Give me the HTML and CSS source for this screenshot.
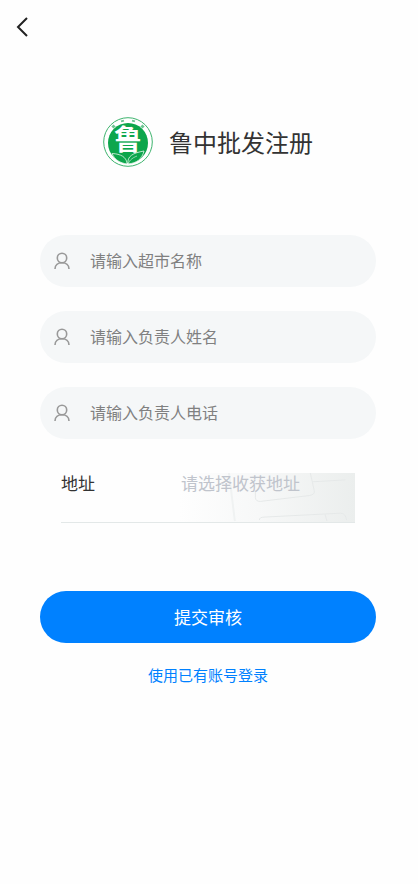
FILE: index.html
```html
<!DOCTYPE html>
<html lang="zh-CN">
<head>
  <meta charset="UTF-8" />
  <meta name="viewport" content="width=device-width, initial-scale=1.0"/>
  <title>鲁中批发注册</title>
  <link rel="stylesheet" href="styles.css">
</head>
<body>

<header class="nav">
  <button type="button" class="back-button" aria-label="返回">
    <svg width="12" height="20" viewBox="0 0 12 20" fill="none" stroke="#222" stroke-width="2">
      <path d="M11 1 L2 10 L11 19"/>
    </svg>
  </button>
</header>

<main class="main-content">
  <div class="brand">
    <svg class="logo" viewBox="0 0 50 50">
      <circle cx="25" cy="25" r="24.3" fill="#fff" stroke="#3db36d" stroke-width="1"/>
      <circle cx="25" cy="26" r="20" fill="#0da64c"/>
      <g fill="#6cc492">
        <rect x="9" y="8" width="3" height="3" transform="rotate(-43 10.5 9.5)"/>
        <rect x="18" y="3" width="3" height="2" transform="rotate(-16 19.5 4)"/>
        <rect x="29" y="3" width="3" height="2" transform="rotate(16 30.5 4)"/>
        <rect x="38" y="8" width="3" height="3" transform="rotate(43 39.5 9.5)"/>
      </g>
      <text class="logo-text" x="25" y="33" text-anchor="middle">鲁</text>
      <!-- leaves -->
      <path d="M24 46 C23 40 18 37 9 36.5 C12 43 17 46 24 47 Z" fill="#0da64c" stroke="#e4f5eb" stroke-width="0.8"/>
      <path d="M25 47 C24 39 30 36 41 34 C39 42 34 46 25 47 Z" fill="#0da64c" stroke="#e4f5eb" stroke-width="0.8"/>
      <path d="M25 49 C25 44 29 41 34 39" fill="none" stroke="#e4f5eb" stroke-width="0.6"/>
    </svg>
    <h1>鲁中批发注册</h1>
  </div>

  <form class="register-form">
    <label class="field">
      <svg class="user-icon" viewBox="0 0 16 18">
        <circle cx="8" cy="6" r="4.7"/>
        <path d="M1 17 C1 13 4 10.7 8 10.7 C12 10.7 15 13 15 17"/>
      </svg>
      <input type="text" placeholder="请输入超市名称" aria-label="超市名称">
    </label>
    <label class="field">
      <svg class="user-icon" viewBox="0 0 16 18">
        <circle cx="8" cy="6" r="4.7"/>
        <path d="M1 17 C1 13 4 10.7 8 10.7 C12 10.7 15 13 15 17"/>
      </svg>
      <input type="text" placeholder="请输入负责人姓名" aria-label="负责人姓名">
    </label>
    <label class="field">
      <svg class="user-icon" viewBox="0 0 16 18">
        <circle cx="8" cy="6" r="4.7"/>
        <path d="M1 17 C1 13 4 10.7 8 10.7 C12 10.7 15 13 15 17"/>
      </svg>
      <input type="tel" placeholder="请输入负责人电话" aria-label="负责人电话">
    </label>

    <div class="address">
      <svg class="address-map" viewBox="0 0 180 50" preserveAspectRatio="none">
        <defs>
          <linearGradient id="mapFade">
            <stop offset="0" stop-color="#fefefe"/>
            <stop offset="0.45" stop-color="#f7f8f8"/>
            <stop offset="1" stop-color="#ebeeed"/>
          </linearGradient>
        </defs>
        <rect width="180" height="50" fill="url(#mapFade)"/>
        <g fill="none" stroke="#e5e8e8" stroke-width="1">
          <path d="M51 0 L57 49" stroke="#f0f2f2" stroke-width="2"/>
          <path d="M78 18 V25 Q78 29 83 29 L133 23 Q139 22 138 18 L134 0"/>
          <path d="M136 9 L170 7"/>
          <path d="M82 48 Q82 45 87 45 L165 41 Q170 41 171 48 M149 42 L151 49"/>
        </g>
      </svg>
      <label for="address">地址</label>
      <input type="text" id="address" placeholder="请选择收获地址" readonly>
    </div>

    <button type="submit" class="submit-button">提交审核</button>
  </form>

  <a href="#" class="login-link">使用已有账号登录</a>
</main>

</body>
</html>
```

FILE: styles.css
```css
* {
  box-sizing: border-box;
}

body {
  font-family: "Noto Sans CJK SC", sans-serif;
  margin: 0;
  background-color: #fefefe;
  color: #333;
}

input,
button {
  font-family: inherit;
  border: none;
  padding: 0;
}

.nav {
  display: flex;
  align-items: center;
  height: 54px;
  padding: 0 16px;
}

.back-button {
  display: flex;
  background: none;
  cursor: pointer;
}

.main-content {
  display: flex;
  flex-direction: column;
  padding: 63px 42px 0 40px;
}

.brand {
  display: flex;
  justify-content: center;
  align-items: center;
  gap: 16px;
}

.logo {
  width: 50px;
  height: 50px;
}

.logo-text {
  font-size: 28px;
  font-weight: bold;
  fill: #fff;
}

.brand h1 {
  margin: 0;
  font-size: 24px;
  line-height: 36px;
  font-weight: normal;
}

.register-form {
  display: flex;
  flex-direction: column;
  gap: 24px;
  margin-top: 68px;
}

.field {
  display: flex;
  align-items: center;
  gap: 20px;
  height: 52px;
  padding: 0 14px;
  border-radius: 26px;
  background-color: #f5f7f8;
}

.user-icon {
  width: 16px;
  height: 18px;
  flex: none;
  fill: none;
  stroke: #999;
  stroke-width: 1.6;
}

.field input {
  flex: 1;
  min-width: 0;
  height: 24px;
  padding-bottom: 2px;
  font-size: 16px;
  background: none;
  outline: none;
}

.field input::placeholder {
  color: #808080;
}

.address {
  position: relative;
  display: flex;
  align-items: flex-start;
  height: 50px;
  margin: 10px 21px 0;
  border-bottom: 1px solid #e3e8e8;
  font-size: 17px;
  line-height: 20px;
}

.address-map {
  position: absolute;
  top: 0;
  right: 0;
  width: 60%;
  height: 100%;
}

.address label {
  position: relative;
  width: 120px;
}

.address input {
  position: relative;
  flex: 1;
  min-width: 0;
  height: 20px;
  padding-bottom: 2px;
  font-size: 17px;
  background: none;
  outline: none;
}

.address input::placeholder {
  color: #c0c4cc;
}

.submit-button {
  height: 52px;
  margin-top: 44px;
  padding-bottom: 2px;
  border-radius: 26px;
  background-color: #0081ff;
  color: white;
  font-size: 17px;
  cursor: pointer;
}

.login-link {
  align-self: center;
  margin-top: 20px;
  color: #0081ff;
  font-size: 15px;
  line-height: 24px;
  text-decoration: none;
}
```
